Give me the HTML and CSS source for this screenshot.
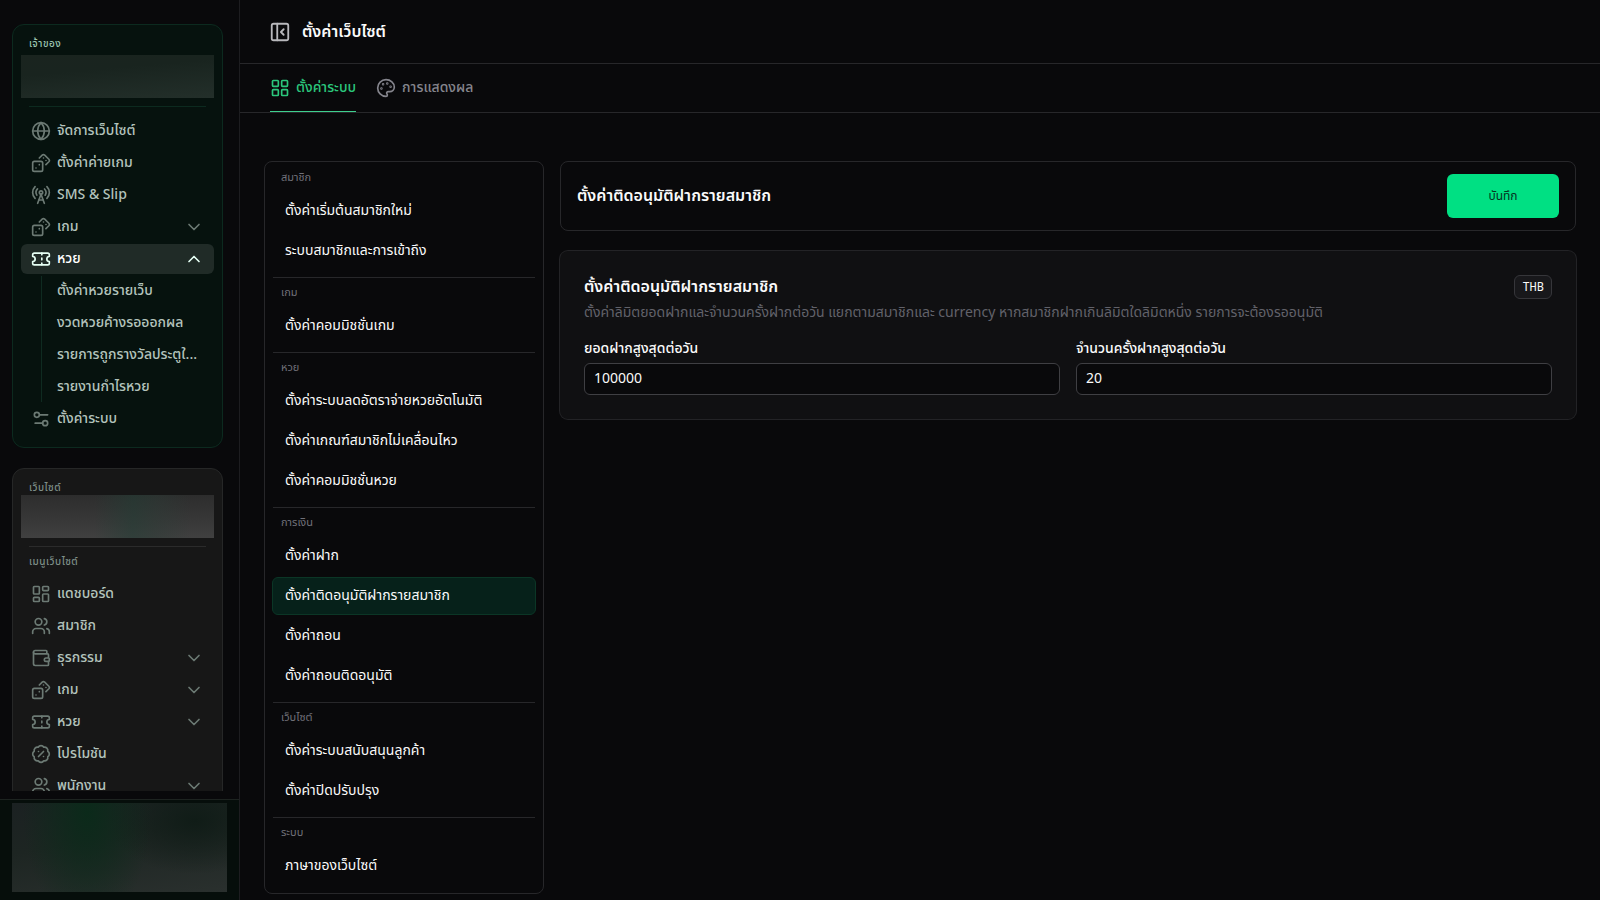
FILE: index.html
```html
<!DOCTYPE html>
<html lang="th">
<head>
    <meta charset="UTF-8">
    <meta name="viewport" content="width=device-width, initial-scale=1.0">
    <title>ตั้งค่าเว็บไซต์</title>
    <link rel="stylesheet" href="styles.css">
</head>
<body>
    <!-- icon set -->
    <svg class="sprite" aria-hidden="true">
        <symbol id="i-globe" viewBox="0 0 24 24"><circle cx="12" cy="12" r="10"/><path d="M12 2a14.5 14.5 0 0 0 0 20 14.5 14.5 0 0 0 0-20"/><path d="M2 12h20"/></symbol>
        <symbol id="i-dices" viewBox="0 0 24 24"><rect width="12" height="12" x="2" y="10" rx="2"/><path d="m17.92 14 3.5-3.5a2.24 2.24 0 0 0 0-3l-5-4.92a2.24 2.24 0 0 0-3 0L10 6"/><path d="M6 18h.01M10 14h.01M15 6h.01M18 9h.01"/></symbol>
        <symbol id="i-tower" viewBox="0 0 24 24"><path d="M4.9 16.1C1 12.2 1 5.8 4.9 1.9"/><path d="M7.8 4.7a6.14 6.14 0 0 0-.8 7.5"/><circle cx="12" cy="9" r="2"/><path d="M16.2 4.8c2 2 2.26 5.11.8 7.47"/><path d="M19.1 1.9a9.96 9.96 0 0 1 0 14.1"/><path d="M9.5 18h5"/><path d="m8 22 4-11 4 11"/></symbol>
        <symbol id="i-ticket" viewBox="0 0 24 24"><path d="M2 9a3 3 0 0 1 0 6v2a2 2 0 0 0 2 2h16a2 2 0 0 0 2-2v-2a3 3 0 0 1 0-6V7a2 2 0 0 0-2-2H4a2 2 0 0 0-2 2Z"/><path d="M13 5v2M13 17v2M13 11v2"/></symbol>
        <symbol id="i-settings" viewBox="0 0 24 24"><path d="M20 7h-9M14 17H5"/><circle cx="17" cy="17" r="3"/><circle cx="7" cy="7" r="3"/></symbol>
        <symbol id="i-dashboard" viewBox="0 0 24 24"><rect width="7" height="9" x="3" y="3" rx="1"/><rect width="7" height="5" x="14" y="3" rx="1"/><rect width="7" height="9" x="14" y="12" rx="1"/><rect width="7" height="5" x="3" y="16" rx="1"/></symbol>
        <symbol id="i-users" viewBox="0 0 24 24"><path d="M16 21v-2a4 4 0 0 0-4-4H6a4 4 0 0 0-4 4v2"/><circle cx="9" cy="7" r="4"/><path d="M22 21v-2a4 4 0 0 0-3-3.87M16 3.13a4 4 0 0 1 0 7.75"/></symbol>
        <symbol id="i-wallet" viewBox="0 0 24 24"><path d="M19 7V4a1 1 0 0 0-1-1H5a2 2 0 0 0 0 4h15a1 1 0 0 1 1 1v4h-3a2 2 0 0 0 0 4h3a1 1 0 0 0 1-1v-2a1 1 0 0 0-1-1"/><path d="M3 5v14a2 2 0 0 0 2 2h15a1 1 0 0 0 1-1v-4"/></symbol>
        <symbol id="i-percent" viewBox="0 0 24 24"><path d="M3.85 8.62a4 4 0 0 1 4.78-4.77 4 4 0 0 1 6.74 0 4 4 0 0 1 4.78 4.78 4 4 0 0 1 0 6.74 4 4 0 0 1-4.77 4.78 4 4 0 0 1-6.75 0 4 4 0 0 1-4.78-4.77 4 4 0 0 1 0-6.76Z"/><path d="m15 9-6 6M9 9h.01M15 15h.01"/></symbol>
        <symbol id="i-panel" viewBox="0 0 24 24"><rect width="18" height="18" x="3" y="3" rx="2"/><path d="M9 3v18M16 15l-3-3 3-3"/></symbol>
        <symbol id="i-grid" viewBox="0 0 24 24"><rect width="7" height="7" x="3" y="3" rx="1"/><rect width="7" height="7" x="14" y="3" rx="1"/><rect width="7" height="7" x="14" y="14" rx="1"/><rect width="7" height="7" x="3" y="14" rx="1"/></symbol>
        <symbol id="i-palette" viewBox="0 0 24 24"><circle cx="13.5" cy="6.5" r=".5"/><circle cx="17.5" cy="10.5" r=".5"/><circle cx="8.5" cy="7.5" r=".5"/><circle cx="6.5" cy="12.5" r=".5"/><path d="M12 2C6.5 2 2 6.5 2 12s4.5 10 10 10c.926 0 1.648-.746 1.648-1.688 0-.437-.18-.835-.437-1.125-.29-.289-.438-.652-.438-1.125a1.64 1.64 0 0 1 1.668-1.668h1.996c3.051 0 5.555-2.503 5.555-5.554C21.965 6.012 17.461 2 12 2z"/></symbol>
        <symbol id="i-down" viewBox="0 0 24 24"><path d="m6 9 6 6 6-6"/></symbol>
        <symbol id="i-up" viewBox="0 0 24 24"><path d="m18 15-6-6-6 6"/></symbol>
    </svg>

    <div class="app">
        <aside class="sidebar">
            <div class="sidebar-scroll">
                <!-- owner menu -->
                <nav class="menu-card owner">
                    <div class="menu-label">เจ้าของ</div>
                    <div class="account owner-account"></div>
                    <hr>
                    <ul class="menu">
                        <li><a href="#"><svg class="icon"><use href="#i-globe"/></svg><span>จัดการเว็บไซต์</span></a></li>
                        <li><a href="#"><svg class="icon"><use href="#i-dices"/></svg><span>ตั้งค่าค่ายเกม</span></a></li>
                        <li><a href="#"><svg class="icon"><use href="#i-tower"/></svg><span>SMS &amp; Slip</span></a></li>
                        <li><button type="button"><svg class="icon"><use href="#i-dices"/></svg><span>เกม</span><svg class="chevron"><use href="#i-down"/></svg></button></li>
                        <li>
                            <button type="button" class="open"><svg class="icon"><use href="#i-ticket"/></svg><span>หวย</span><svg class="chevron"><use href="#i-up"/></svg></button>
                            <ul class="submenu">
                                <li><a href="#"><span>ตั้งค่าหวยรายเว็บ</span></a></li>
                                <li><a href="#"><span>งวดหวยค้างรอออกผล</span></a></li>
                                <li><a href="#"><span>รายการถูกรางวัลประตูใ...</span></a></li>
                                <li><a href="#"><span>รายงานกำไรหวย</span></a></li>
                            </ul>
                        </li>
                        <li><a href="#"><svg class="icon"><use href="#i-settings"/></svg><span>ตั้งค่าระบบ</span></a></li>
                    </ul>
                </nav>

                <!-- website menu -->
                <nav class="menu-card site">
                    <div class="menu-label">เว็บไซต์</div>
                    <div class="account site-account"></div>
                    <hr>
                    <div class="menu-label sub-label">เมนูเว็บไซต์</div>
                    <ul class="menu">
                        <li><a href="#"><svg class="icon"><use href="#i-dashboard"/></svg><span>แดชบอร์ด</span></a></li>
                        <li><a href="#"><svg class="icon"><use href="#i-users"/></svg><span>สมาชิก</span></a></li>
                        <li><button type="button"><svg class="icon"><use href="#i-wallet"/></svg><span>ธุรกรรม</span><svg class="chevron"><use href="#i-down"/></svg></button></li>
                        <li><button type="button"><svg class="icon"><use href="#i-dices"/></svg><span>เกม</span><svg class="chevron"><use href="#i-down"/></svg></button></li>
                        <li><button type="button"><svg class="icon"><use href="#i-ticket"/></svg><span>หวย</span><svg class="chevron"><use href="#i-down"/></svg></button></li>
                        <li><a href="#"><svg class="icon"><use href="#i-percent"/></svg><span>โปรโมชัน</span></a></li>
                        <li><button type="button"><svg class="icon"><use href="#i-users"/></svg><span>พนักงาน</span><svg class="chevron"><use href="#i-down"/></svg></button></li>
                    </ul>
                </nav>
            </div>
            <div class="sidebar-footer">
                <div class="profile"></div>
            </div>
        </aside>

        <main class="main">
            <header class="topbar">
                <button type="button" class="collapse" aria-label="ย่อเมนู"><svg class="icon"><use href="#i-panel"/></svg></button>
                <h1>ตั้งค่าเว็บไซต์</h1>
            </header>

            <nav class="tabs">
                <a href="#" class="tab active"><svg class="icon"><use href="#i-grid"/></svg><span>ตั้งค่าระบบ</span></a>
                <a href="#" class="tab"><svg class="icon"><use href="#i-palette"/></svg><span>การแสดงผล</span></a>
            </nav>

            <div class="content">
                <nav class="settings-nav">
                    <section>
                        <h3>สมาชิก</h3>
                        <a href="#">ตั้งค่าเริ่มต้นสมาชิกใหม่</a>
                        <a href="#">ระบบสมาชิกและการเข้าถึง</a>
                    </section>
                    <section>
                        <h3>เกม</h3>
                        <a href="#">ตั้งค่าคอมมิชชั่นเกม</a>
                    </section>
                    <section>
                        <h3>หวย</h3>
                        <a href="#">ตั้งค่าระบบลดอัตราจ่ายหวยอัตโนมัติ</a>
                        <a href="#">ตั้งค่าเกณฑ์สมาชิกไม่เคลื่อนไหว</a>
                        <a href="#">ตั้งค่าคอมมิชชั่นหวย</a>
                    </section>
                    <section>
                        <h3>การเงิน</h3>
                        <a href="#">ตั้งค่าฝาก</a>
                        <a href="#" class="selected">ตั้งค่าติดอนุมัติฝากรายสมาชิก</a>
                        <a href="#">ตั้งค่าถอน</a>
                        <a href="#">ตั้งค่าถอนติดอนุมัติ</a>
                    </section>
                    <section>
                        <h3>เว็บไซต์</h3>
                        <a href="#">ตั้งค่าระบบสนับสนุนลูกค้า</a>
                        <a href="#">ตั้งค่าปิดปรับปรุง</a>
                    </section>
                    <section>
                        <h3>ระบบ</h3>
                        <a href="#">ภาษาของเว็บไซต์</a>
                    </section>
                </nav>

                <form class="panel">
                    <div class="panel-head">
                        <h2>ตั้งค่าติดอนุมัติฝากรายสมาชิก</h2>
                        <button type="submit" class="save">บันทึก</button>
                    </div>
                    <div class="card">
                        <div class="card-head">
                            <h2>ตั้งค่าติดอนุมัติฝากรายสมาชิก</h2>
                            <span class="badge">THB</span>
                        </div>
                        <p>ตั้งค่าลิมิตยอดฝากและจำนวนครั้งฝากต่อวัน แยกตามสมาชิกและ currency หากสมาชิกฝากเกินลิมิตใดลิมิตหนึ่ง รายการจะต้องรออนุมัติ</p>
                        <div class="fields">
                            <div class="field">
                                <label for="max-amount">ยอดฝากสูงสุดต่อวัน</label>
                                <input type="text" id="max-amount" value="100000">
                            </div>
                            <div class="field">
                                <label for="max-count">จำนวนครั้งฝากสูงสุดต่อวัน</label>
                                <input type="text" id="max-count" value="20">
                            </div>
                        </div>
                    </div>
                </form>
            </div>
        </main>
    </div>
</body>
</html>
```
FILE: styles.css
```css
* {
    box-sizing: border-box;
}

body {
    margin: 0;
    background-color: #09090b;
    color: #fafafa;
    font-family: "Noto Sans Thai", "Noto Sans", sans-serif;
    font-size: 14px;
    line-height: 20px;
}

h1, h2, h3, p, ul {
    margin: 0;
    padding: 0;
}

ul {
    list-style: none;
}

a {
    color: inherit;
    text-decoration: none;
}

button, input {
    font: inherit;
    color: inherit;
}

button {
    border: none;
    background: none;
    cursor: pointer;
}

/* Icons */
.sprite {
    display: none;
}

.icon, .chevron {
    flex: none;
    width: 20px;
    height: 20px;
    fill: none;
    stroke: currentColor;
    stroke-width: 2;
    stroke-linecap: round;
    stroke-linejoin: round;
}

.app {
    display: flex;
    height: 100vh;
    overflow: hidden;
}

/* Sidebar */
.sidebar {
    display: flex;
    flex-direction: column;
    flex: none;
    width: 240px;
    border-right: 1px solid #1d1d20;
}

.sidebar-scroll {
    flex: 1;
    min-height: 0;
    margin-bottom: 8px;
    padding: 24px 16px 0 12px;
    overflow: hidden;
}

.menu-card {
    padding: 13px 8px;
    border: 1px solid #262727;
    border-radius: 12px;
    background-color: #171717;
}

.menu-card + .menu-card {
    margin-top: 20px;
}

.menu-card.owner {
    border-color: #0c2a1f;
    background-color: #06120e;
}

.menu-label {
    padding: 0 8px;
    color: #7e8f88;
    font-size: 10px;
    font-weight: 500;
    line-height: 13px;
    letter-spacing: 0.5px;
}

.menu-label.sub-label {
    padding-bottom: 10px;
}

.owner .menu-label {
    color: #9bc4b0;
}

.account {
    height: 43px;
}

.owner .account {
    margin-top: 4px;
}

.owner-account {
    background: linear-gradient(175deg, #1a241f, #19241f 35%, #232f2a);
}

.site-account {
    background:
        linear-gradient(90deg, transparent 38%, rgba(34, 62, 53, 0.5) 58%, rgba(42, 60, 54, 0.4) 70%, transparent 88%),
        linear-gradient(0deg, #404040, #363636 50%, #2d2d2d);
}

.menu-card hr {
    height: 1px;
    margin: 8px 8px 9px;
    border: none;
    background-color: #2b2b2b;
}

.menu-card.owner hr {
    background-color: #0c2a1f;
}

.menu {
    color: #b3c3bc;
    font-weight: 500;
}

.menu li + li {
    margin-top: 2px;
}

.menu a, .menu button {
    display: flex;
    align-items: center;
    gap: 6px;
    width: 100%;
    height: 30px;
    padding: 0 10px;
    border-radius: 6px;
    text-align: left;
}

.menu span {
    flex: 1;
    line-height: 28px;
    white-space: nowrap;
}

.menu .icon, .menu .chevron {
    color: #6c7a74;
}

.menu button.open {
    background-color: #202b27;
    color: #fff;
}

.menu .open .icon, .menu .open .chevron {
    color: #e6fff4;
}

.submenu {
    margin: 2px 0 2px 20px;
    border-left: 1px solid #0f2b21;
}

.menu .submenu a {
    padding: 0 10px 0 15px;
}

.sidebar-footer {
    padding: 3px 12px 8px;
    border-top: 1px solid #1d2320;
    background-color: #060e0b;
}

.profile {
    height: 89px;
    background:
        radial-gradient(ellipse 30% 130% at 35% 10%, #0b2a1a, transparent),
        radial-gradient(ellipse 40% 60% at 85% 20%, #101c17, transparent),
        linear-gradient(170deg, #1b2122, #1d2522 40%, #2a302e);
}

/* Main area */
.main {
    flex: 1;
    min-width: 0;
    overflow: hidden;
}

.topbar {
    display: flex;
    align-items: center;
    gap: 11px;
    height: 64px;
    padding: 0 29px;
    border-bottom: 1px solid #27272a;
}

.topbar h1 {
    font-size: 16px;
    font-weight: 600;
    line-height: 24px;
}

.collapse {
    display: flex;
    padding: 0;
    color: #b8b8bc;
}

.collapse .icon {
    width: 22px;
    height: 22px;
}

.tabs {
    display: flex;
    gap: 20px;
    height: 49px;
    padding: 0 30px;
    border-bottom: 1px solid #27272a;
}

.tab {
    display: flex;
    align-items: center;
    gap: 6px;
    border-bottom: 1px solid transparent;
    color: #85858d;
    font-weight: 500;
}

.tab.active {
    border-color: #3ecf8e;
    color: #2bc77c;
}

.content {
    display: grid;
    grid-template-columns: 280px 1fr;
    align-items: start;
    gap: 16px;
    padding: 48px 24px 0;
}

/* Settings navigation */
.settings-nav {
    padding: 1px 8px;
    border: 1px solid #27272a;
    border-radius: 8px;
}

.settings-nav section {
    display: flex;
    flex-direction: column;
    gap: 2px;
    padding: 7px 0;
}

.settings-nav section + section {
    border-top: 1px solid #27272a;
}

.settings-nav h3 {
    padding: 0 8px;
    margin-bottom: 4px;
    color: #71717a;
    font-size: 11px;
    font-weight: 400;
    line-height: 16px;
}

.settings-nav a {
    margin: 0 -1px;
    padding: 8px 12px;
    border: 1px solid transparent;
    border-radius: 6px;
}

.settings-nav a.selected {
    border-color: #0b3626;
    background-color: #06211a;
}

/* Form */
.panel {
    display: flex;
    flex-direction: column;
    gap: 20px;
}

.panel h2 {
    font-size: 16px;
    font-weight: 600;
    line-height: 24px;
}

.panel-head {
    display: flex;
    align-items: center;
    justify-content: space-between;
    padding: 12px 16px;
    border: 1px solid #27272a;
    border-radius: 8px;
}

.save {
    width: 112px;
    height: 44px;
    border-radius: 6px;
    background-color: #00e083;
    color: #06331f;
    font-size: 12px;
}

.card {
    padding: 24px;
    border-radius: 8px;
    background-color: #101012;
    box-shadow: 0 0 0 1px #232326;
}

.card-head {
    display: flex;
    align-items: center;
    justify-content: space-between;
}

.card p {
    margin-top: 4px;
    color: #62626a;
}

.badge {
    padding: 2px 7px;
    border: 1px solid #36363a;
    border-radius: 6px;
    background-color: #18181b;
    font-family: "Noto Sans Mono", "DejaVu Sans Mono", monospace;
    font-size: 12px;
    line-height: 18px;
}

.fields {
    display: grid;
    grid-template-columns: 1fr 1fr;
    gap: 16px;
    margin-top: 16px;
}

.field {
    display: flex;
    flex-direction: column;
    gap: 4px;
}

.field label {
    font-weight: 500;
}

.field input {
    width: 100%;
    height: 32px;
    padding: 0 9px 2px;
    border: 1px solid #3f3f43;
    border-radius: 6px;
    background-color: #09090b;
}
```
